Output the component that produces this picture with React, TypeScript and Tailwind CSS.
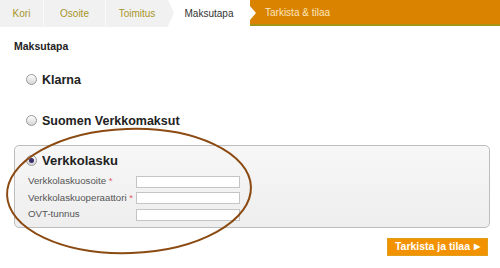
import React from "react"

const steps = [
  { label: "Kori", w: "w-[44px]" },
  { label: "Osoite", w: "w-[62px]" },
  { label: "Toimitus", w: "w-[62px]" },
]

function Radio({ checked }: { checked?: boolean }) {
  return (
    <span className="w-[11px] h-[11px] rounded-full border border-[#9a9a9a] bg-gradient-to-b from-[#fdfdfd] to-[#d6d6d6] flex items-center justify-center shrink-0">
      {checked && <span className="w-[5px] h-[5px] rounded-full bg-[#3a2d6e]" />}
    </span>
  )
}

function Field({ label, required }: { label: string; required?: boolean }) {
  return (
    <div className="flex items-center h-[16.5px]">
      <span className="w-[108px] whitespace-nowrap text-[9.7px] text-[#555]">
        {label}
        {required && <span className="text-[#e0606a]"> *</span>}
      </span>
      <input className="w-[104px] h-[12px] bg-white border border-[#c4c4c4] outline-none" />
    </div>
  )
}

export default function App() {
  return (
    <div className="relative w-[500px] h-[268px] bg-white overflow-hidden font-['Liberation_Sans',Arial,sans-serif]">
      {/* step bar */}
      <div className="flex h-[26px] text-[10px]">
        {steps.map((s, i) => (
          <div
            key={s.label}
            className={`relative ${s.w} h-[27px] bg-[#f1f1f1] flex items-center justify-center text-[#a8952a] ${i < 2 ? "border-r border-[#fafafa]" : ""}`}
          >
            {s.label}
          </div>
        ))}
        <div className="relative w-[82px] h-[27px] bg-white flex items-center justify-center text-[#333]">
          <span className="absolute left-0 top-0 border-y-[13px] border-y-transparent border-l-[6px] border-l-[#f1f1f1]" />
          Maksutapa
          <span className="absolute -right-[6px] top-[6px] z-10 border-y-[7px] border-y-transparent border-l-[6px] border-l-white" />
        </div>
        <div className="flex-1 h-[26px] bg-[#d98300] border-b-2 border-[#a69414] flex items-center pl-[15px] text-[#fde6bd]">
          Tarkista &amp; tilaa
        </div>
      </div>

      <div className="px-[14px] pt-[15px]">
        <h2 className="text-[10.5px] font-bold text-[#222] leading-none">Maksutapa</h2>

        <div className="flex items-center gap-[5px] pl-[12px] mt-[20px] text-[12.5px] font-bold text-[#222] leading-[16px]">
          <Radio />
          Klarna
        </div>
        <div className="flex items-center gap-[5px] pl-[12px] mt-[25px] text-[12.5px] font-bold text-[#222] leading-[16px]">
          <Radio />
          Suomen Verkkomaksut
        </div>

        <div className="mt-[16px] w-[476px] h-[83px] rounded-[5px] border border-[#bdbdbd] bg-gradient-to-b from-[#f7f7f7] to-[#eeeeee] pt-[7px] pl-[13px]">
          <div className="flex items-center gap-[5px] -ml-[2px] text-[13px] font-bold text-[#222] leading-[16px]">
            <Radio checked />
            Verkkolasku
          </div>
          <div className="mt-[5px] flex flex-col">
            <Field label="Verkkolaskuosoite" required />
            <Field label="Verkkolaskuoperaattori" required />
            <Field label="OVT-tunnus" />
          </div>
        </div>

        <div className="flex justify-end mt-[10px] -mr-[2px]">
          <button className="w-[101px] h-[18px] bg-[#f39200] border border-[#e0a01a] text-white text-[10.5px] font-bold flex items-center justify-center gap-[4px]">
            Tarkista ja tilaa
            <span className="text-[8px]">▶</span>
          </button>
        </div>
      </div>

      {/* hand-drawn ellipse marking */}
      <svg className="absolute left-0 top-0 pointer-events-none" width="500" height="268">
        <ellipse cx="129" cy="191" rx="122" ry="62" fill="none" stroke="#8b4a12" strokeWidth="2" transform="rotate(-2 129 191)" />
      </svg>
    </div>
  )
}
